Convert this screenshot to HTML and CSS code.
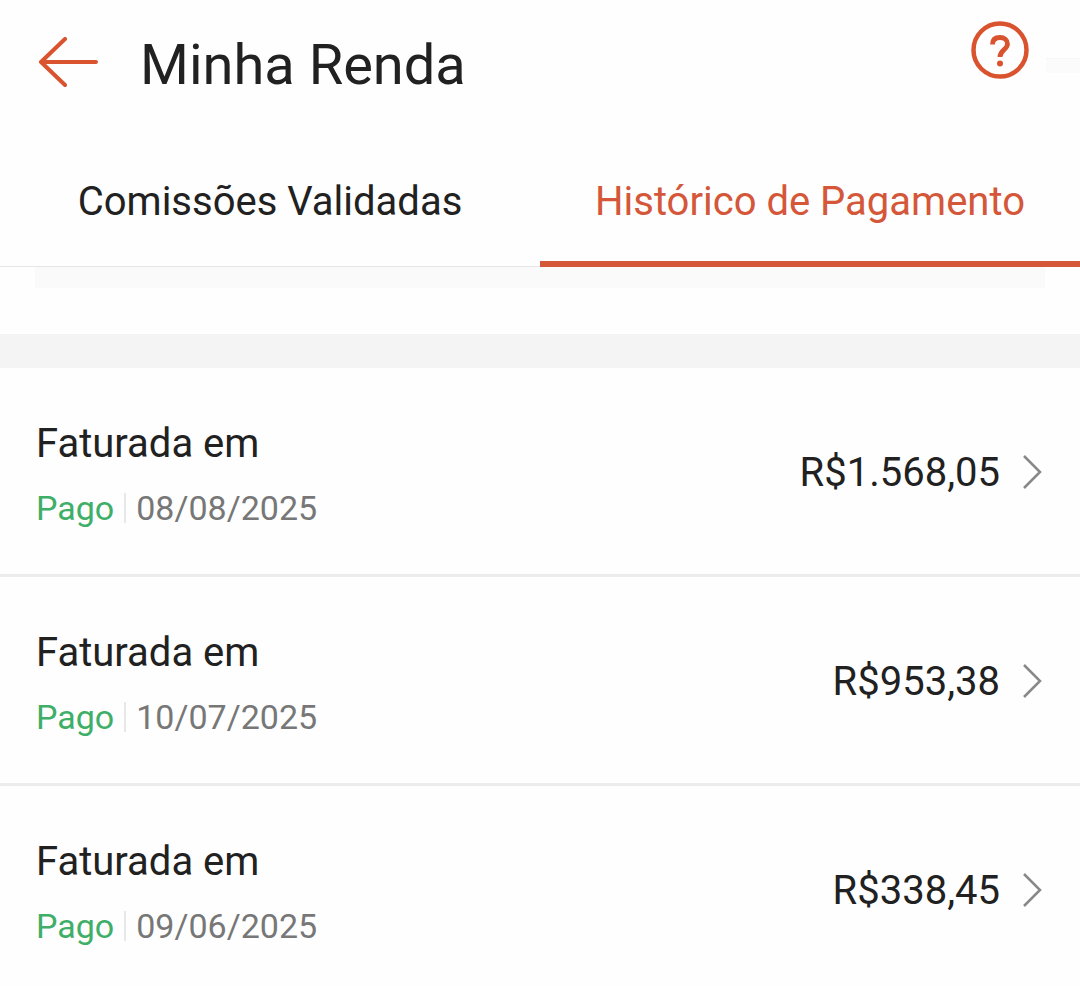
FILE: index.html
```html
<!DOCTYPE html>
<html lang="pt-BR">
<head>
    <meta charset="UTF-8">
    <meta name="viewport" content="width=device-width, initial-scale=1.0">
    <title>Minha Renda</title>
    <link rel="stylesheet" href="styles.css">
</head>
<body>
    <header class="header">
        <button class="icon-button" type="button" aria-label="Voltar">
            <svg class="back-icon" viewBox="0 0 64 56" fill="none" stroke="currentColor" stroke-width="4" stroke-linecap="round" stroke-linejoin="round">
                <path d="M29 2L5 25L29 48M5 25H60"/>
            </svg>
        </button>
        <h1>Minha Renda</h1>
        <button class="icon-button help-button" type="button" aria-label="Ajuda">
            <svg class="help-icon" viewBox="0 0 60 60" fill="none" stroke="currentColor">
                <circle cx="30" cy="30" r="26.5" stroke-width="4.5"/>
                <path d="M22.5 24.5C22.5 19.5 25.5 17.5 30 17.5C34.500 17.5 37.5 20 37.5 24C37.5 29.5 30 30 30 37" stroke-width="4.8"/>
                <circle cx="30" cy="43.5" r="3" fill="currentColor" stroke="none"/>
            </svg>
        </button>
    </header>

    <nav class="tabs">
        <a class="tab" href="#comissoes">Comissões Validadas</a>
        <a class="tab active" href="#historico" aria-current="page">Histórico de Pagamento</a>
    </nav>

    <main>
        <div class="summary">
            <div class="summary-card"></div>
        </div>

        <ul class="payments">
            <li>
                <a class="payment" href="#pagamento-2025-08">
                    <div class="payment-info">
                        <h2>Faturada em</h2>
                        <p><span class="status">Pago</span><time datetime="2025-08-08">08/08/2025</time></p>
                    </div>
                    <span class="amount">R$1.568,05</span>
                    <svg class="chevron" viewBox="0 0 20 36" fill="none" stroke="currentColor" stroke-width="2.5"><path d="M2 1L18 17L2 33"/></svg>
                </a>
            </li>
            <li>
                <a class="payment" href="#pagamento-2025-07">
                    <div class="payment-info">
                        <h2>Faturada em</h2>
                        <p><span class="status">Pago</span><time datetime="2025-07-10">10/07/2025</time></p>
                    </div>
                    <span class="amount">R$953,38</span>
                    <svg class="chevron" viewBox="0 0 20 36" fill="none" stroke="currentColor" stroke-width="2.5"><path d="M2 1L18 17L2 33"/></svg>
                </a>
            </li>
            <li>
                <a class="payment" href="#pagamento-2025-06">
                    <div class="payment-info">
                        <h2>Faturada em</h2>
                        <p><span class="status">Pago</span><time datetime="2025-06-09">09/06/2025</time></p>
                    </div>
                    <span class="amount">R$338,45</span>
                    <svg class="chevron" viewBox="0 0 20 36" fill="none" stroke="currentColor" stroke-width="2.5"><path d="M2 1L18 17L2 33"/></svg>
                </a>
            </li>
        </ul>
    </main>
</body>
</html>
```

FILE: styles.css
```css
* {
    margin: 0;
    padding: 0;
    box-sizing: border-box;
}

body {
    font-family: Roboto, "Liberation Sans", sans-serif;
    background: #fefefe;
    color: #212121;
}

a {
    color: inherit;
    text-decoration: none;
}

.header {
    display: flex;
    align-items: center;
    padding: 28px 0 34px 36px;
}

/* Faint strip at the right edge of the bar */
.header::after {
    content: "";
    width: 34px;
    height: 14px;
    background: #fbfbfb;
    border-top: 1px solid #f7f7f7;
}

.header h1 {
    flex: 1;
    margin-left: 40px;
    font-size: 56px;
    line-height: 74px;
    font-weight: 400;
}

.icon-button {
    display: flex;
    border: none;
    background: none;
    color: #d9532f;
    cursor: pointer;
}

.back-icon {
    width: 64px;
    height: 56px;
}

.help-button {
    align-self: flex-start;
    margin: -8px 16px 0 0;
}

.help-icon {
    width: 60px;
    height: 60px;
}

.tabs {
    display: flex;
    border-bottom: 1px solid #e6e6e6;
}

.tab {
    flex: 1;
    padding: 41px 0 34px;
    margin-bottom: -1px;
    border-bottom: 6px solid transparent;
    font-size: 40px;
    line-height: 50px;
    text-align: center;
}

.tab.active {
    color: #d4573a;
    border-bottom-color: #d4573a;
}

/* Bottom edge of the summary card, scrolled under the tabs */
.summary {
    padding: 0 35px 46px;
    border-bottom: 34px solid #f4f4f4;
}

.summary-card {
    height: 21px;
    background: #fafafa;
}

.payments {
    list-style: none;
}

.payments li + li {
    border-top: 3px solid #ececec;
}

.payment {
    display: flex;
    align-items: center;
    padding: 52px 38px 48px 36px;
}

.payment-info {
    flex: 1;
}

.payment-info h2 {
    margin-bottom: 22px;
    font-size: 40px;
    line-height: 48px;
    font-weight: 400;
}

.payment-info p {
    display: flex;
    align-items: center;
    font-size: 34px;
    line-height: 36px;
    color: #777777;
}

.status {
    display: flex;
    align-items: center;
    color: #3fae68;
}

.status::after {
    content: "";
    width: 2px;
    height: 30px;
    margin: 0 10px;
    background: #e8e8e8;
}

.amount {
    font-size: 40px;
    line-height: 48px;
}

.chevron {
    width: 20px;
    height: 36px;
    margin-left: 22px;
    color: #888888;
}
```
